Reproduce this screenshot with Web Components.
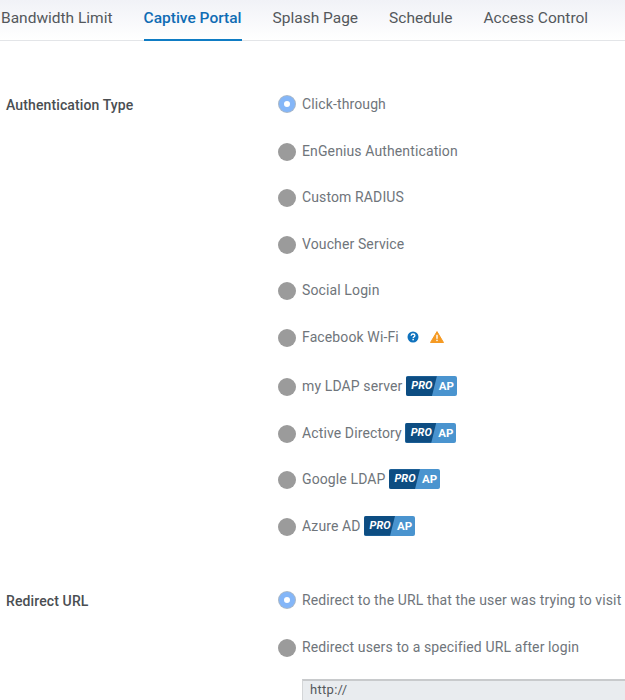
<!DOCTYPE html>
<html>
<head>
<meta charset="utf-8">
<title>Captive Portal</title>
<style>
  html, body { margin: 0; padding: 0; background: #fff; }
  body { width: 625px; height: 700px; overflow: hidden; font-family: Roboto, "Liberation Sans", sans-serif; }
</style>
</head>
<body>
<tab-bar>
  <tab-item>Bandwidth Limit</tab-item>
  <tab-item active>Captive Portal</tab-item>
  <tab-item>Splash Page</tab-item>
  <tab-item>Schedule</tab-item>
  <tab-item>Access Control</tab-item>
</tab-bar>

<form-row label="Authentication Type" style="margin-top:40px">
  <radio-option checked>Click-through</radio-option>
  <radio-option>EnGenius Authentication</radio-option>
  <radio-option>Custom RADIUS</radio-option>
  <radio-option>Voucher Service</radio-option>
  <radio-option>Social Login</radio-option>
  <radio-option>Facebook Wi-Fi<help-icon style="margin-left:8px"></help-icon><warn-icon style="margin-left:11px"></warn-icon></radio-option>
  <radio-option style="margin-top:3px">my LDAP server<pro-badge></pro-badge></radio-option>
  <radio-option>Active Directory<pro-badge></pro-badge></radio-option>
  <radio-option>Google LDAP<pro-badge></pro-badge></radio-option>
  <radio-option>Azure AD<pro-badge></pro-badge></radio-option>
</form-row>

<form-row label="Redirect URL" style="margin-top:28px">
  <radio-option checked>Redirect to the URL that the user was trying to visit</radio-option>
  <radio-option>Redirect users to a specified URL after login</radio-option>
  <url-input value="http://"></url-input>
</form-row>

<script>
(function() {

  class TabBar extends HTMLElement {
    constructor() {
      super();
      this.attachShadow({ mode: 'open' });
      this.shadowRoot.innerHTML = `
        <style>
          :host {
            display: flex;
            gap: 31px;
            height: 40px;
            padding-left: 1px;
            box-sizing: content-box;
            border-bottom: 1px solid #e3e5e8;
            background: linear-gradient(#f1f2f7, #ffffff);
          }
        </style>
        <slot></slot>
      `;
    }
  }

  class TabItem extends HTMLElement {
    constructor() {
      super();
      this.attachShadow({ mode: 'open' });
      this.shadowRoot.innerHTML = `
        <style>
          :host {
            display: block;
            height: 40px;
            line-height: 37px;
            font-size: 15.5px;
            color: #54585c;
            white-space: nowrap;
            box-sizing: content-box;
          }
          :host([active]) {
            color: #0f6cb4;
            font-weight: 500;
            border-bottom: 2px solid #0f7cc4;
            height: 39px;
          }
        </style>
        <slot></slot>
      `;
    }
  }

  class FormRow extends HTMLElement {
    constructor() {
      super();
      this.attachShadow({ mode: 'open' });
      this.shadowRoot.innerHTML = `
        <style>
          :host {
            display: grid;
            grid-template-columns: 278px 1fr;
            font-size: 14px;
          }
          .label {
            padding-left: 6px;
            padding-top: 1px;
            font-weight: 500;
            letter-spacing: 0.12px;
            color: #4a4e52;
            line-height: 46.5px;
            height: 46.5px;
          }
          .body { display: flex; flex-direction: column; }
        </style>
        <div class="label"></div>
        <div class="body"><slot></slot></div>
      `;
      this.shadowRoot.querySelector('.label').textContent = this.getAttribute('label');
    }
  }

  class RadioOption extends HTMLElement {
    constructor() {
      super();
      this.attachShadow({ mode: 'open' });
      this.shadowRoot.innerHTML = `
        <style>
          :host {
            display: flex;
            align-items: center;
            height: 46.5px;
            font-size: 14px;
            letter-spacing: 0.12px;
            color: #6f757b;
            white-space: nowrap;
          }
          .dot {
            flex: none;
            width: 18px;
            height: 18px;
            border-radius: 50%;
            background: #9b9b9b;
            margin-right: 6px;
            position: relative;
            top: 1px;
          }
          :host([checked]) .dot {
            box-sizing: border-box;
            background: #fff;
            border: 5px solid #84b6f8;
            box-shadow: 0 0 0 1px #a9b8c8;
            width: 16px;
            height: 16px;
            margin: 0 7px 0 1px;
            top: 0;
          }
          .text { display: inline-flex; align-items: center; }
        </style>
        <span class="dot"></span>
        <span class="text"><slot></slot></span>
      `;
    }
  }

  class HelpIcon extends HTMLElement {
    constructor() {
      super();
      this.attachShadow({ mode: 'open' });
      this.shadowRoot.innerHTML = `
        <style>
          :host { display: block; width: 12px; height: 12px; }
          svg { display: block; }
        </style>
        <svg width="12" height="12" viewBox="0 0 12 12">
          <circle cx="6" cy="6" r="5.5" fill="#0f72bd"/>
          <path d="M4.1 4.7C4.2 3.6 5 3 6 3c1.1 0 1.9.6 1.9 1.5 0 .7-.4 1.1-1 1.4-.5.3-.7.5-.7 1" fill="none" stroke="#fff" stroke-width="1.3"/>
          <rect x="5.4" y="7.8" width="1.5" height="1.5" fill="#fff"/>
        </svg>
      `;
    }
  }

  class WarnIcon extends HTMLElement {
    constructor() {
      super();
      this.attachShadow({ mode: 'open' });
      this.shadowRoot.innerHTML = `
        <style>
          :host { display: block; width: 14px; height: 12px; }
          svg { display: block; }
        </style>
        <svg width="14" height="12" viewBox="0 0 14 12">
          <path d="M7 .6 13.5 11.5H.5Z" fill="#f59a23" stroke="#f59a23" stroke-width="1" stroke-linejoin="round"/>
          <rect x="6.3" y="3.8" width="1.4" height="4" fill="#fff"/>
          <rect x="6.3" y="8.7" width="1.4" height="1.4" fill="#fff"/>
        </svg>
      `;
    }
  }

  class ProBadge extends HTMLElement {
    constructor() {
      super();
      this.attachShadow({ mode: 'open' });
      this.shadowRoot.innerHTML = `
        <style>
          :host {
            display: block;
            position: relative;
            width: 51px;
            height: 20px;
            margin-left: 3.4px;
            border-radius: 2px;
            overflow: hidden;
            background: #4a94cf;
            letter-spacing: 0;
            color: #fff;
            font-size: 11px;
            line-height: 20px;
            font-weight: 700;
          }
          .pro {
            position: absolute;
            inset: 0 auto 0 0;
            width: 31px;
            background: #0d4d82;
            clip-path: polygon(0 0, 100% 0, 84% 100%, 0 100%);
            padding-left: 5.5px;
            box-sizing: border-box;
            font-style: italic;
          }
          .ap { position: absolute; left: 33px; top: 0; font-size: 11.5px; }
        </style>
        <span class="pro">PRO</span><span class="ap">AP</span>
      `;
    }
  }

  class UrlInput extends HTMLElement {
    constructor() {
      super();
      this.attachShadow({ mode: 'open' });
      this.shadowRoot.innerHTML = `
        <style>
          :host {
            display: block;
            margin: 9px 0 0 24px;
            height: 30px;
            box-sizing: border-box;
            padding-left: 7px;
            background: #e9ecef;
            border-top: 2px solid #c8cacc;
            border-left: 1px solid #d4d6d8;
            font-size: 13px;
            line-height: 17px;
            letter-spacing: 0.3px;
            color: #54585c;
          }
        </style>
        <span></span>
      `;
      this.shadowRoot.querySelector('span').textContent = this.getAttribute('value');
    }
  }

  customElements.define('tab-bar', TabBar);
  customElements.define('tab-item', TabItem);
  customElements.define('form-row', FormRow);
  customElements.define('radio-option', RadioOption);
  customElements.define('help-icon', HelpIcon);
  customElements.define('warn-icon', WarnIcon);
  customElements.define('pro-badge', ProBadge);
  customElements.define('url-input', UrlInput);
})();
</script>
</body>
</html>
